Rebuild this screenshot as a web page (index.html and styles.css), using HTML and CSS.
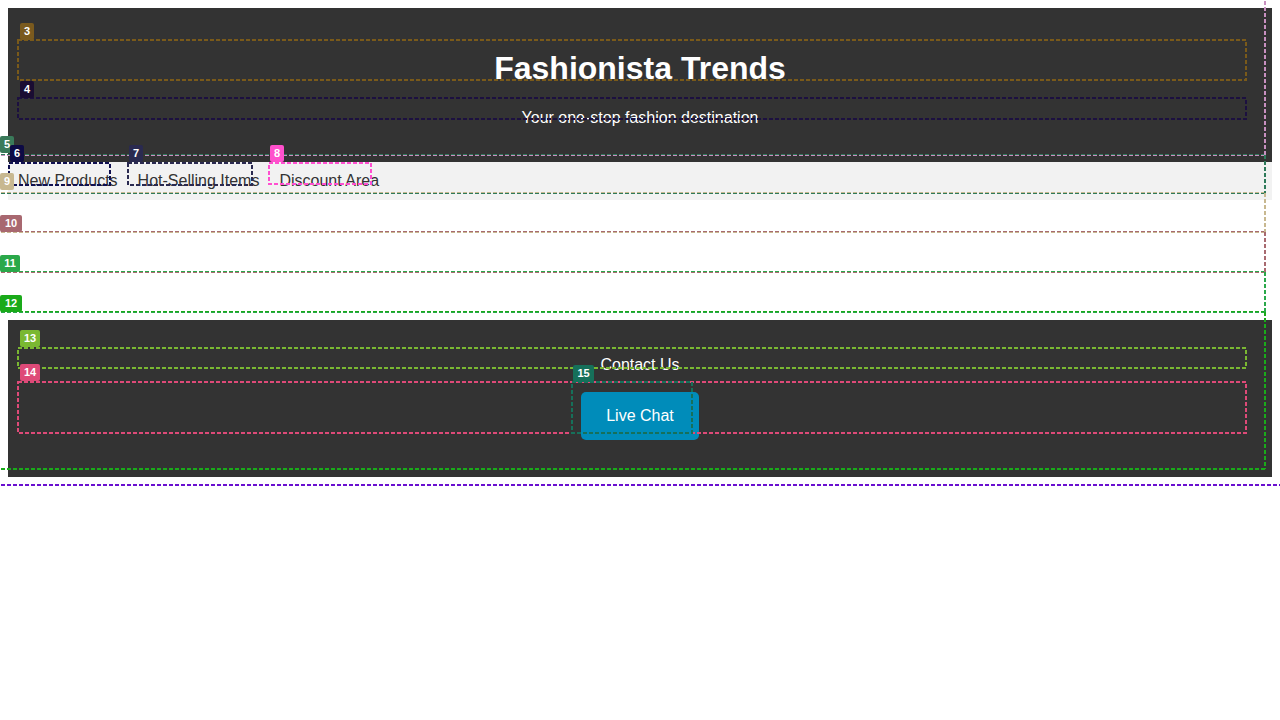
FILE: index.html
```html
<!DOCTYPE html>
<html lang="en">
<head>
<meta charset="utf-8">
<title>Fashionista Trends</title>
<link rel="stylesheet" href="styles.css">
</head>
<body>
<header class="site-header">
  <h1 class="title">Fashionista Trends</h1>
  <p class="tagline">Your one-stop fashion destination</p>
</header>
<nav class="site-nav">
  <ul class="nav-list">
    <li class="nav-item">New Products</li>
    <li class="nav-item">Hot-Selling Items</li>
    <li class="nav-item">Discount Area</li>
  </ul>
</nav>
<main class="content">
  <section class="block"></section>
  <section class="block"></section>
  <section class="block"></section>
</main>
<footer class="site-footer">
  <p class="contact">Contact Us</p>
  <div class="chat"><a class="chat-btn">Live Chat</a></div>
</footer>

<div class="overlay">
  <svg class="overlay-svg" width="1280" height="720" viewBox="0 0 1280 720">
    <g fill="none" stroke-dasharray="4 2">
      <!-- full-width stacked boxes: thin edges so neighbours show side by side -->
      <g stroke-width="1">
        <path d="M-5 155.5 H1265" stroke="#c890c0"/>
        <path d="M-5 154.5 H1265 M-5 193.5 H1265" stroke="#2e7a5a"/>
        <path d="M-5 192.5 H1265 M-5 232.5 H1265" stroke="#c8b890"/>
        <path d="M-5 231.5 H1265 M-5 272.5 H1265" stroke="#a86a70"/>
        <path d="M-5 271.5 H1265 M-5 312.5 H1265" stroke="#2aa84a"/>
        <path d="M-5 311.5 H1265" stroke="#1aaa1a"/>
      </g>
      <g stroke-width="2">
        <path d="M-5 485 H1285" stroke="#6a10d0"/>
        <path d="M1265 -5 V155" stroke="#c890c0"/>
        <path d="M1265 155 V193" stroke="#2e7a5a"/>
        <path d="M1265 193 V232" stroke="#c8b890"/>
        <path d="M1265 232 V272" stroke="#a86a70"/>
        <path d="M1265 272 V312" stroke="#2aa84a"/>
        <path d="M1265 312 V469 M-5 469 H1265" stroke="#1aaa1a"/>
        <rect x="18" y="40" width="1228" height="40" stroke="#7a5a1a"/>
        <rect x="18" y="98" width="1228" height="21" stroke="#1c1040"/>
        <rect x="9" y="163" width="101" height="22" stroke="#101050"/>
        <rect x="128" y="163" width="124" height="22" stroke="#2a2a50"/>
        <rect x="269" y="163" width="102" height="21" stroke="#ff4fd0"/>
        <rect x="18" y="348" width="1228" height="20" stroke="#7ab832"/>
        <rect x="18" y="382" width="1228" height="51" stroke="#de4a78"/>
        <rect x="572" y="382" width="120" height="51" stroke="#16705a"/>
      </g>
    </g>
  </svg>
  <span class="tag tag-3">3</span>
  <span class="tag tag-4">4</span>
  <span class="tag tag-5">5</span>
  <span class="tag tag-6">6</span>
  <span class="tag tag-7">7</span>
  <span class="tag tag-8">8</span>
  <span class="tag tag-9">9</span>
  <span class="tag tag-10">10</span>
  <span class="tag tag-11">11</span>
  <span class="tag tag-12">12</span>
  <span class="tag tag-13">13</span>
  <span class="tag tag-14">14</span>
  <span class="tag tag-15">15</span>
</div>
</body>
</html>
```
FILE: styles.css
```css
body {
  margin: 8px;
  font-family: "Liberation Sans", Arial, sans-serif;
  font-size: 16px;
  color: #333;
  background: #fff;
}

.site-header {
  background: #333;
  color: #fff;
  text-align: center;
  padding: 21px 18px 19px;
}

.title {
  font-size: 32px;
  font-weight: bold;
  margin: 21px 0 22px;
  line-height: 37px;
}

.tagline {
  margin: 16px 0;
  line-height: 18px;
}

.site-nav {
  background: #f2f2f2;
  padding: 10px 10px 10px;
}

.nav-list {
  list-style: none;
  margin: 0;
  padding: 0;
  display: flex;
  gap: 20px;
  line-height: 18px;
}

.block {
  height: 40px;
}

.site-footer {
  background: #333;
  color: #fff;
  text-align: center;
  padding: 20px 20px 21px;
}

.contact {
  margin: 16px 0;
  line-height: 18px;
}

.chat {
  margin: 16px 0 0;
  padding-top: 2px;
  padding-bottom: 16px;
}

.chat-btn {
  display: inline-block;
  vertical-align: top;
  background: #008cba;
  color: #fff;
  padding: 15px 25px;
  line-height: 18px;
  border-radius: 5px;
}

/* debug overlay */
.overlay {
  position: absolute;
  top: 0;
  left: 0;
  width: 1280px;
  height: 720px;
  pointer-events: none;
  overflow: hidden;
}

.overlay-svg {
  position: absolute;
  top: 0;
  left: 0;
}

.tag {
  position: absolute;
  height: 17px;
  line-height: 17px;
  font-size: 11px;
  font-weight: bold;
  color: #fff;
  text-align: center;
  border-radius: 2px;
  font-family: "Liberation Sans", Arial, sans-serif;
}

.tag-3 { left: 20px; top: 23px; width: 14px; background: #7a5a1e; }
.tag-4 { left: 20px; top: 81px; width: 14px; background: #1a0c32; }
.tag-5 { left: 0; top: 136px; width: 14px; background: #3a7a5a; }
.tag-6 { left: 10px; top: 145px; width: 14px; background: #0d0a45; }
.tag-7 { left: 129px; top: 145px; width: 14px; background: #2a2a50; }
.tag-8 { left: 270px; top: 145px; width: 14px; background: #ff50cc; }
.tag-9 { left: 0; top: 173px; width: 14px; background: #c8b890; }
.tag-10 { left: 0; top: 215px; width: 22px; background: #a86870; }
.tag-11 { left: 0; top: 255px; width: 20px; background: #2aa84a; }
.tag-12 { left: 0; top: 295px; width: 22px; background: #1aaa1a; }
.tag-13 { left: 20px; top: 330px; width: 20px; background: #7ab832; }
.tag-14 { left: 20px; top: 364px; width: 20px; background: #de4a78; }
.tag-15 { left: 573px; top: 365px; width: 21px; background: #16705a; }
```
